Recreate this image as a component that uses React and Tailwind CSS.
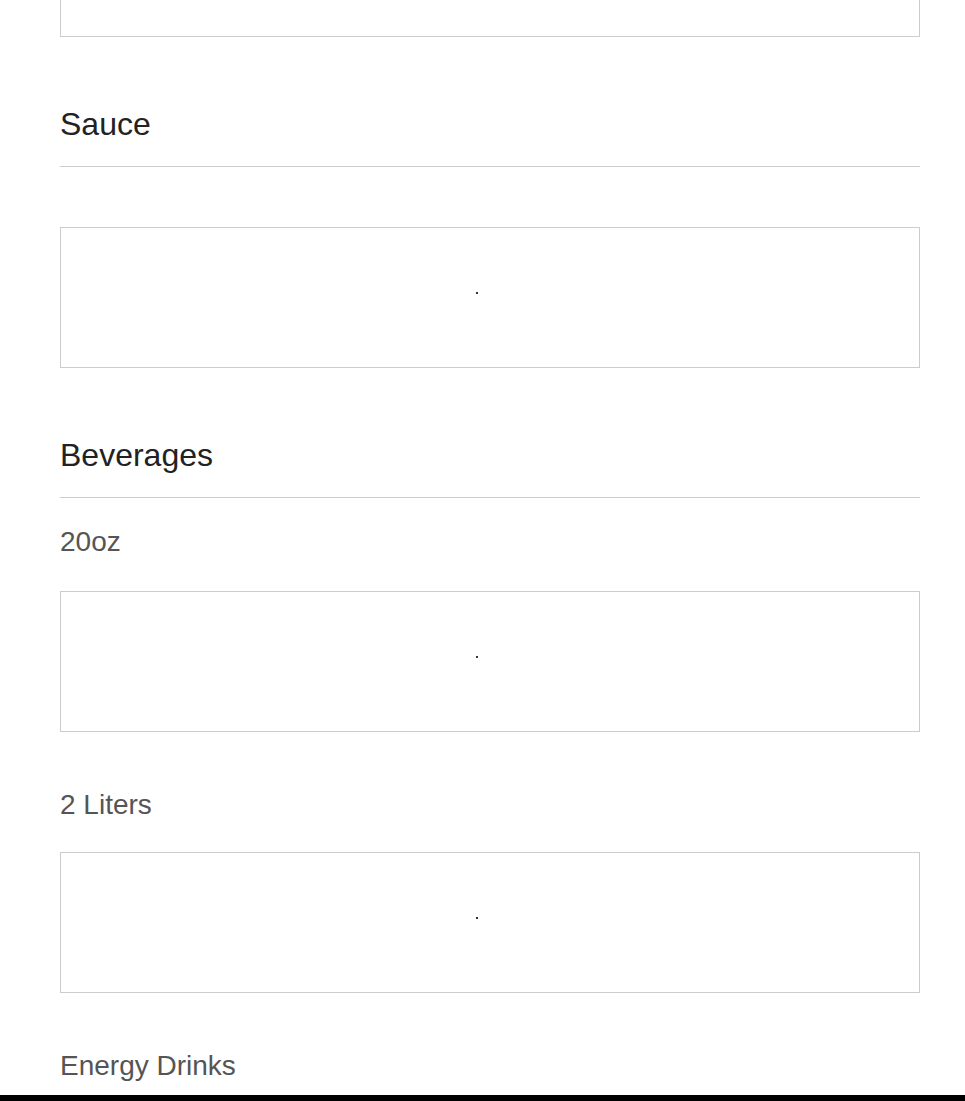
const sections = [
  { title: "Sauce", groups: [{ name: null }] },
  {
    title: "Beverages",
    groups: [{ name: "20oz" }, { name: "2 Liters" }, { name: "Energy Drinks", open: true }],
  },
];

function ItemBox() {
  return (
    <div className="h-[141px] border border-[#cccccc] bg-white pl-[415px] pt-[64px]">
      <div className="h-[2px] w-[2px] bg-[#333]" />
    </div>
  );
}

function Group({ group, first }) {
  if (!group.name) {
    return (
      <div className="mt-[60px]">
        <ItemBox />
      </div>
    );
  }
  return (
    <div className={first ? "mt-[28px]" : "mt-[57px]"}>
      <h3 className="text-[28px] leading-8 text-[#555555]">{group.name}</h3>
      {!group.open && (
        <div className={first ? "mt-[33px]" : "mt-[31px]"}>
          <ItemBox />
        </div>
      )}
    </div>
  );
}

function Section({ section }) {
  return (
    <section className="mt-[69px]">
      <h2 className="text-[32px] leading-9 text-[#222222]">{section.title}</h2>
      <hr className="mt-[24px] border-t border-[#cccccc]" />
      {section.groups.map((g, i) => (
        <Group key={i} group={g} first={i === 0} />
      ))}
    </section>
  );
}

export default function App() {
  return (
    <div className="h-[1101px] overflow-hidden bg-white font-['Liberation_Sans',Arial,sans-serif]">
      <div className="ml-[60px] w-[860px]">
        <div className="h-[37px] border-x border-b border-[#cccccc]" />
        {sections.map((s) => (
          <Section key={s.title} section={s} />
        ))}
      </div>
      <div className="fixed bottom-0 left-0 h-[6px] w-full bg-black" />
    </div>
  );
}
